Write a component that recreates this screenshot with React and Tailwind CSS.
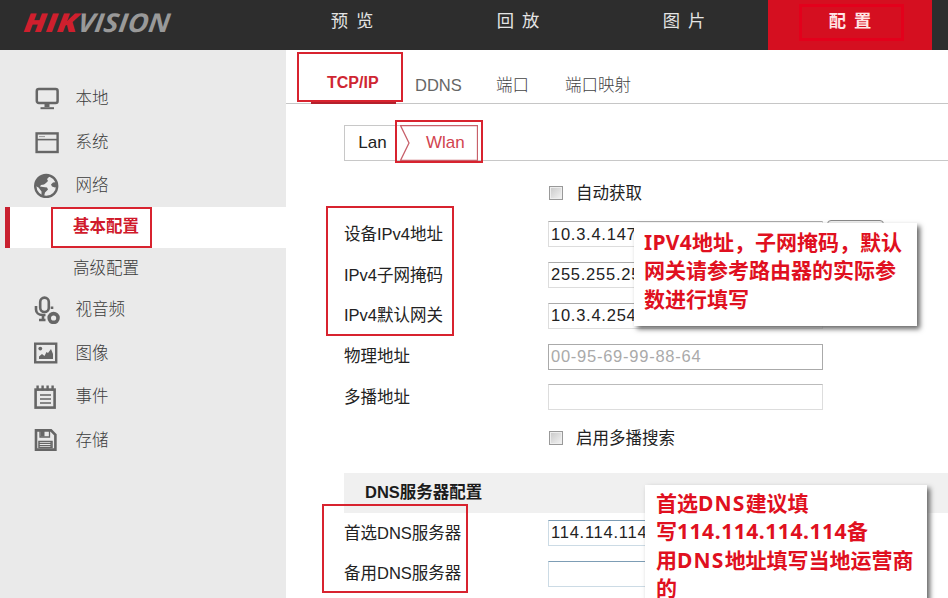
import React, { useState } from 'react';
import clsx from 'clsx';

const navItems = ['预 览', '回 放', '图 片', '配 置'];
const tabs = ['TCP/IP', 'DDNS', '端口', '端口映射'];

// Red marker drawn on top of a control
const Marker = ({ className }) => (
  <span className={clsx('absolute pointer-events-none border-2 border-[#d8232f]', className)} />
);

const MonitorIcon = () => (
  <svg width="26" height="26" viewBox="0 0 26 26" fill="none" stroke="#666" strokeWidth="2.5">
    <rect x="2.8" y="3" width="20.8" height="14" rx="2" />
    <path d="M13 17v4" strokeWidth="5" />
    <path d="M6.5 22.2h13.5" strokeWidth="2" />
  </svg>
);

const WindowIcon = () => (
  <svg width="26" height="26" viewBox="0 0 26 26" fill="none" stroke="#666">
    <rect x="2.6" y="4.4" width="21" height="18.6" strokeWidth="2.4" />
    <path d="M3 10.6h20" strokeWidth="1.6" />
    <path d="M5 7.6h6" stroke="#999" strokeWidth="1" />
  </svg>
);

const GlobeIcon = () => (
  <svg width="26" height="26" viewBox="0 0 26 26">
    <circle cx="12.2" cy="14" r="11" fill="none" stroke="#666" strokeWidth="2.4" />
    <path
      d="M1.5 14C1.5 7 7 3 13 3l3 1-3 3 1 2-2 2-2 1.500-3 .5-1 1.500 3 .5 4 .5 1 2-3 3-1 4-2.500-1v-4l-3-4z"
      fill="#666"
    />
    <path d="M17 12.500l2-2 4-.5 1 4.500-3 1-3-1z" fill="#666" />
  </svg>
);

const MicIcon = () => (
  <svg width="26" height="28" viewBox="0 0 26 28" fill="none" stroke="#666" strokeWidth="2.6">
    <rect x="6.2" y="1.6" width="8.6" height="14.4" rx="4.3" />
    <path d="M2 10v3.5c0 3 2.500 5.500 6.500 5.500h3M9 19v4M5 24h6.500" />
    <path d="M18 10.500v2.500" />
    <circle cx="19.600" cy="22" r="4.400" strokeWidth="3.600" />
  </svg>
);

const PictureIcon = () => (
  <svg width="26" height="26" viewBox="0 0 26 26">
    <rect x="1.2" y="3.7" width="21" height="18.6" fill="none" stroke="#666" strokeWidth="2.4" />
    <circle cx="6.3" cy="8.6" r="1.9" fill="#666" />
    <path d="M5 19v-2.500l3-2.500 2.500 2 2-4 1.500 1 3-4 2 5v5z" fill="#666" />
  </svg>
);

const NotesIcon = () => (
  <svg width="26" height="26" viewBox="0 0 26 26" fill="none" stroke="#666">
    <rect x="1.6" y="5.600" width="19" height="18" strokeWidth="2.6" />
    <path d="M3.600 1.500v5M8.600 1.500v5M13.600 1.500v5M18.600 1.500v5" strokeWidth="2.4" />
    <path d="M6 11h11M6 15h11M6 19h11" strokeWidth="1.4" />
  </svg>
);

const DiskIcon = () => (
  <svg width="26" height="26" viewBox="0 0 26 26" fill="none" stroke="#666">
    <path d="M2 3.400h15l4.400 4.400v14.800H2z" strokeWidth="2.6" />
    <path d="M6 3v7h9.500V3" strokeWidth="1.3" />
    <path d="M6.500 4h4v5.500h-4z" fill="#666" stroke="none" />
    <path d="M5 14.500h13v6H5z" strokeWidth="1.5" />
    <path d="M5 16.500h12M5 18.500h12M17 14.500v6" strokeWidth="1.2" />
  </svg>
);

const SideItem = ({ icon: Icon, children }) => (
  <li className="flex h-[43.4px] items-center gap-4 pl-[33.5px]">
    <Icon />
    <span>{children}</span>
  </li>
);

const Sidebar = () => (
  <aside className="w-[286px] shrink-0 bg-[#eaeaea] pt-[27px] text-[16.5px] font-light text-[#3c3c3c]">
    <ul>
      <SideItem icon={MonitorIcon}>本地</SideItem>
      <SideItem icon={WindowIcon}>系统</SideItem>
      <SideItem icon={GlobeIcon}>网络</SideItem>
      <li className="relative ml-[5px] flex h-[41px] items-center border-l-[5px] border-[#c8202f] bg-white pl-[63px] font-bold text-[#d01a2c]">
        <span className="relative -top-px">基本配置</span>
        <Marker className="left-[41px] top-0 h-[41px] w-[101px]" />
      </li>
      <li className="flex h-10 items-center pl-[73px]">高级配置</li>
      <SideItem icon={MicIcon}>视音频</SideItem>
      <SideItem icon={PictureIcon}>图像</SideItem>
      <SideItem icon={NotesIcon}>事件</SideItem>
      <SideItem icon={DiskIcon}>存储</SideItem>
    </ul>
  </aside>
);

const Header = () => (
  <header className="flex h-[50px] shrink-0 bg-[#2d2d2d]">
    <div className="w-[269px]">
      <svg width="200" height="50" viewBox="0 0 200 50">
        <g transform="translate(23 32) skewX(-7)" fontFamily="Open Sans, sans-serif" fontSize="26" fontStyle="italic">
          <text x="0" y="0" fontWeight="800" fill="#cf1f2d" textLength="54" lengthAdjust="spacingAndGlyphs">
            HIK
          </text>
          <text x="54" y="0" fontWeight="700" fill="#999" textLength="92" lengthAdjust="spacingAndGlyphs">
            VISION
          </text>
        </g>
      </svg>
    </div>
    <nav className="flex">
      {navItems.map((item, i) => (
        <a
          key={item}
          className={clsx(
            'relative flex w-[166px] items-center justify-center pb-1.5 text-[17.3px] [word-spacing:3px]',
            i === 3 ? 'font-bold text-[#ffe5e5]' : 'text-[#e4e4e4]'
          )}
        >
          {i === 3 && (
            <span className="absolute inset-y-0 left-0 right-0 mx-px bg-[#d50f20]">
              <Marker className="left-[31px] top-[4px] h-[37px] w-[105px] border-[3px] border-[#e3001b]" />
            </span>
          )}
          <span className="relative">{item}</span>
        </a>
      ))}
    </nav>
  </header>
);

const Tabs = () => (
  <div className="relative flex h-[54px] items-end border-b border-[#c6c6c6] pb-[5px] pl-[41px] text-[16.5px] text-[#666]">
    <a className="w-[88px] pb-[3px] text-[16px] font-bold text-[#cf2632]">{tabs[0]}</a>
    <a className="w-[81px]">{tabs[1]}</a>
    <a className="w-[69px] font-light text-[#444]">{tabs[2]}</a>
    <a className="font-light text-[#444]">{tabs[3]}</a>
    <span className="absolute -bottom-px left-[25px] h-0.5 w-[85px] bg-[#b5202c]" />
    <Marker className="left-[11px] top-[2px] h-[50px] w-[106px]" />
  </div>
);

const SubTabs = () => (
  <div className="ml-[58px] mt-[21px] flex h-9 border-b border-[#c8c8c8] text-[17px]">
    <a className="flex w-[56px] items-center justify-center border-l border-t border-[#c8c8c8] text-[#222]">Lan</a>
    <a className="relative flex w-[78px] items-center pl-[26px] text-[#d2444f]">
      Wlan
      <svg className="absolute left-0 top-0" width="78" height="36" fill="none" stroke="#c8606a" strokeWidth="1.3">
        <path d="M0.5 .5h77v35H.5L9 18z" />
      </svg>
      <Marker className="-left-[5px] -top-[5px] h-[43px] w-[88px]" />
    </a>
  </div>
);

const Field = ({ label, value = '', placeholder, className }) => {
  const [text, setText] = useState(value);
  return (
    <div className="flex h-[40.8px] items-center">
      <label className="w-[204px] text-[#222]">{label}</label>
      <input
        value={text}
        placeholder={placeholder}
        onChange={(e) => setText(e.target.value)}
        className={clsx(
          'h-[26px] w-[275px] border bg-white px-[2px] text-[16.5px] tracking-[0.75px] text-[#222] outline-none placeholder:text-[#aaa]',
          className || 'border-[#ddd] border-t-[#aaa]'
        )}
      />
    </div>
  );
};

const CheckRow = ({ children }) => (
  <label className="ml-[205px] flex h-[40.8px] items-center gap-[13px] text-[#222]">
    <span className="h-[14px] w-[14px] border border-[#999] bg-gradient-to-br from-[#c8c8c8] to-[#f4f4f4] shadow-[inset_0_0_0_1px_#eee]" />
    {children}
  </label>
);

const Callout = ({ className, children }) => (
  <div
    className={clsx(
      'absolute bg-white font-bold text-[21px] leading-[28.5px] text-[#e01020] shadow-[3px_3px_5px_#666] font-["Noto_Sans","Noto_Sans_CJK_SC",sans-serif]',
      className
    )}
  >
    {children}
  </div>
);

const App = () => (
  <div className='relative flex h-[598px] w-[948px] flex-col overflow-hidden bg-white font-["Liberation_Sans","Noto_Sans_CJK_SC",sans-serif]'>
    <Header />
    <div className="flex min-h-0 flex-1">
      <Sidebar />
      <main className="min-w-0 flex-1">
        <Tabs />
        <SubTabs />
        <form className="ml-[58px] mt-[12px] text-[16.5px]">
          <CheckRow>自动获取</CheckRow>
          <div className="relative">
            <Field label="设备IPv4地址" value="10.3.4.147" />
            <Field label="IPv4子网掩码" value="255.255.255.0" />
            <Field label="IPv4默认网关" value="10.3.4.254" />
            <Marker className="-left-[18px] -top-[8px] h-[130px] w-[128px]" />
            <span className="absolute left-[483px] top-[6px] h-[26px] w-[57px] rounded-sm border border-[#888] bg-[#eee]" />
            <Callout className="left-[290px] top-[9px] h-[103px] w-[283px] pl-[10px] pt-[5px]">
              <p>
                <span className="tracking-[0.3px]">IPV4</span>地址，子网掩码，默认
              </p>
              <p>网关请参考路由器的实际参</p>
              <p>数进行填写</p>
            </Callout>
          </div>
          <Field label="物理地址" placeholder="00-95-69-99-88-64" className="border-[#aaa]" />
          <Field label="多播地址" className="border-[#ddd] border-t-[#bbb]" />
          <CheckRow>启用多播搜索</CheckRow>
          <h2 className="mt-[14px] flex h-10 items-center bg-[#f0f0f0] pl-[21px] font-bold text-[#1c1c1c]">
            DNS服务器配置
          </h2>
          <div className="relative">
            <Field label="首选DNS服务器" value="114.114.114.114" className="border-[#ccdbe5] border-t-[#7d9db5]" />
            <Field label="备用DNS服务器" className="border-[#ccdbe5] border-t-[#7d9db5]" />
            <Marker className="-left-[22px] -top-[9px] h-[89px] w-[146px]" />
            <Callout className="-top-[28px] left-[301px] h-[130px] w-[282px] pl-[11px] pt-[4px]">
              <p>
                首选<span className="tracking-[1.2px]">DNS</span>建议填
              </p>
              <p>
                写<span className="tracking-[0.55px]">114.114.114.114</span>备
              </p>
              <p>
                用<span className="tracking-[1.2px]">DNS</span>地址填写当地运营商
              </p>
              <p>的</p>
            </Callout>
          </div>
        </form>
      </main>
    </div>
  </div>
);

export default App;
